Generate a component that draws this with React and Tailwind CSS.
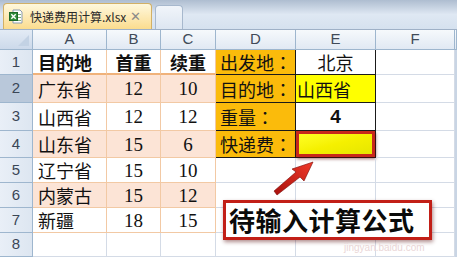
import React from "react";

const cjk = "font-['Noto_Sans_CJK_SC',sans-serif]";
const serif = "font-['Liberation_Serif','Noto_Sans_CJK_SC',serif]";

const widths = ["w-[33px]", "w-[74px]", "w-[54px]", "w-[55px]", "w-[80px]", "w-[80px]", "w-[79px]", "w-[2px]"];
const heights = ["h-[25px]", "h-[28px]", "h-[28px]", "h-[27px]", "h-[25px]", "h-[25px]", "h-[25px]", "h-[24px]"];

const data = [
  ["目的地", "首重", "续重"],
  ["广东省", "12", "10"],
  ["山西省", "12", "12"],
  ["山东省", "15", "6"],
  ["辽宁省", "15", "10"],
  ["内蒙古", "15", "12"],
  ["新疆", "18", "15"],
];

const dLabels = ["出发地", "目的地", "重量", "快递费"];

function ExcelIcon() {
  return (
    <svg width="14" height="15" viewBox="0 0 14 15" className="shrink-0">
      <path d="M4 1h7l2 2v11H4z" fill="#fff" stroke="#8a9bb0" strokeWidth="1" />
      <rect x="6" y="5" width="6" height="1" fill="#7fb27f" />
      <rect x="6" y="8" width="6" height="1" fill="#7fb27f" />
      <rect x="6" y="11" width="6" height="1" fill="#7fb27f" />
      <rect x="0.5" y="3.5" width="8" height="8" fill="#2e8b3a" stroke="#1d6a28" />
      <path d="M2.3 5.3l4.4 4.4M6.7 5.3l-4.4 4.4" stroke="#fff" strokeWidth="1.4" />
    </svg>
  );
}

export default function App() {
  return (
    <div className={`relative w-[457px] h-[257px] overflow-hidden bg-white ${cjk}`}>
      {/* tab bar */}
      <div className="h-[30px] bg-gradient-to-b from-[#aebdd0] via-[#dfe8f3] to-[#d5e1ef] border-b border-[#9fb1c7] flex items-end pl-[3px] gap-[3px]">
        <div className="w-[149px] h-[26px] rounded-t-[4px] border border-b-0 border-[#d2b066] bg-gradient-to-b from-[#fff8dc] to-[#fbdc8e] flex items-center pl-[5px] pr-[10px]">
          <ExcelIcon />
          <span className="ml-[7px] whitespace-nowrap text-[12px] leading-none text-[#2a2a2a] font-['Noto_Sans_CJK_SC','Liberation_Sans',sans-serif]">快递费用计算.xlsx</span>
          <span className="ml-auto text-[13px] leading-none text-[#8a8a8a] font-['Liberation_Sans',sans-serif]">✕</span>
        </div>
        <div className="w-[28px] h-[24px] rounded-t-[4px] border border-b-0 border-[#a7b8cd] bg-gradient-to-b from-[#f1f5fa] to-[#dde6f1]" />
      </div>

      {/* column headers */}
      <div className="flex h-[20px]">
        <div className={`${widths[0]} shrink-0 relative border-r border-b border-[#9eb6ce] bg-gradient-to-b from-[#e3ebf5] to-[#ccd9ea]`}>
          <div className="absolute right-[3px] bottom-[3px] w-0 h-0 border-l-[11px] border-l-transparent border-b-[11px] border-b-[#c3d2e4]" />
        </div>
        {["A", "B", "C", "D", "E", "F", ""].map((c, i) => (
          <div
            key={i}
            className={`${widths[i + 1]} shrink-0 border-r border-b border-[#9eb6ce] bg-gradient-to-b from-[#f6f9fc] to-[#e1e9f3] flex items-center justify-center text-[15px] text-[#404a58] font-['Liberation_Sans',sans-serif]`}
          >
            {c}
          </div>
        ))}
      </div>

      {/* rows */}
      {heights.map((h, r) => {
        const row = data[r];
        const peach = r === 1 || r === 3 || r === 5;
        return (
          <div key={r} className={`flex ${h}`}>
            <div
              className={`${widths[0]} shrink-0 border-r border-b border-[#9eb6ce] flex items-center justify-center text-[15px] text-[#3a4656] font-['Liberation_Sans',sans-serif] ${
                r === 1 ? "bg-[#b9c8da]" : "bg-gradient-to-r from-[#e9eff7] to-[#dde6f1]"
              }`}
            >
              {r + 1}
            </div>
            {row ? (
              <>
                <div
                  className={`${widths[1]} shrink-0 border-r border-[#f2c9a4] ${r === 0 ? "border-b-2 border-b-[#f0b27a]" : "border-b"} ${
                    peach ? "bg-[#fce4d6]" : "bg-white"
                  } flex items-center pl-[5px] text-[18px] text-[#111] leading-none whitespace-nowrap ${r === 0 ? "font-bold" : ""}`}
                >
                  {row[0]}
                </div>
                {[1, 2].map((k) => (
                  <div
                    key={k}
                    className={`${widths[k + 1]} shrink-0 border-r border-[#f2c9a4] ${r === 0 ? "border-b-2 border-b-[#f0b27a]" : "border-b"} ${
                      peach ? "bg-[#fce4d6]" : "bg-white"
                    } flex items-center justify-center leading-none text-[#111] whitespace-nowrap ${
                      r === 0 ? "font-bold text-[18px]" : `${serif} text-[19px]`
                    }`}
                  >
                    {row[k]}
                  </div>
                ))}
              </>
            ) : (
              <>
                <div className={`${widths[1]} shrink-0 border-r border-b border-[#d4dbe6]`} />
                <div className={`${widths[2]} shrink-0 border-r border-b border-[#d4dbe6]`} />
                <div className={`${widths[3]} shrink-0 border-r border-b border-[#d4dbe6]`} />
              </>
            )}
            {r < 4 ? (
              <>
                <div
                  className={`${widths[4]} shrink-0 border-r border-b border-[#1a1a1a] bg-[#fbbb0b] flex items-center pl-[4px] text-[18px] text-[#111] leading-none whitespace-nowrap`}
                >
                  <span>{dLabels[r]}</span>
                  <span className="font-['Noto_Sans_CJK_TC',sans-serif]">：</span>
                </div>
                {r === 0 && (
                  <div className={`${widths[5]} shrink-0 border-r border-b border-[#1a1a1a] bg-white flex items-center justify-center text-[18px] text-[#111] leading-none`}>
                    北京
                  </div>
                )}
                {r === 1 && (
                  <div className={`${widths[5]} shrink-0 border-r border-b border-[#1a1a1a] bg-[#ffff00] flex items-center pl-[1px] text-[18px] text-[#111] leading-none whitespace-nowrap`}>
                    山西省
                  </div>
                )}
                {r === 2 && (
                  <div className={`${widths[5]} shrink-0 border-r border-b border-[#1a1a1a] bg-white flex items-center justify-center text-[19px] font-bold text-[#111] leading-none font-['Liberation_Sans',sans-serif]`}>
                    4
                  </div>
                )}
                {r === 3 && (
                  <div className={`${widths[5]} shrink-0 border-r border-b border-[#1a1a1a] bg-white p-0`}>
                    <div className="w-full h-full border-[3px] border-[#c8281b] bg-gradient-to-br from-[#ffff20] via-[#f5f000] to-[#e6e600] shadow-[1px_2px_3px_rgba(90,0,0,0.55)]" />
                  </div>
                )}
              </>
            ) : (
              <>
                <div className={`${widths[4]} shrink-0 border-r border-b border-[#d4dbe6]`} />
                <div className={`${widths[5]} shrink-0 border-r border-b border-[#d4dbe6]`} />
              </>
            )}
            <div className={`${widths[6]} shrink-0 border-r border-b border-[#d4dbe6]`} />
            <div className={`${widths[7]} shrink-0 bg-[#c9d5e4]`} />
          </div>
        );
      })}

      {/* arrow */}
      <svg className="absolute left-[268px] top-[158px]" width="52" height="40" viewBox="0 0 52 40">
        <defs>
          <linearGradient id="ag" x1="0" y1="1" x2="1" y2="0">
            <stop offset="0" stopColor="#a8100c" />
            <stop offset="1" stopColor="#f03a2a" />
          </linearGradient>
        </defs>
        <path d="M6 33 L28 14 L24 11 L45 4 L36 23 L32 19 L9 37 Z" fill="url(#ag)" stroke="#7a0a06" strokeWidth="0.6" />
      </svg>

      {/* callout */}
      <div className="absolute left-[223px] top-[200px] w-[209px] h-[40px] border-[3px] border-[#c21f17] bg-white shadow-[1px_2px_4px_rgba(80,0,0,0.45)] flex items-center pl-[3px]">
        <span className="whitespace-nowrap text-[26px] font-bold text-[#0a0a0a] leading-none tracking-[0.5px] font-['Noto_Sans_CJK_SC',sans-serif]">待输入计算公式</span>
      </div>
      <div className="absolute left-[344px] top-[243px] whitespace-nowrap text-[10px] text-[#ead6d6] font-['Liberation_Sans',sans-serif] leading-none">jingyan.baidu.com</div>
    </div>
  );
}
